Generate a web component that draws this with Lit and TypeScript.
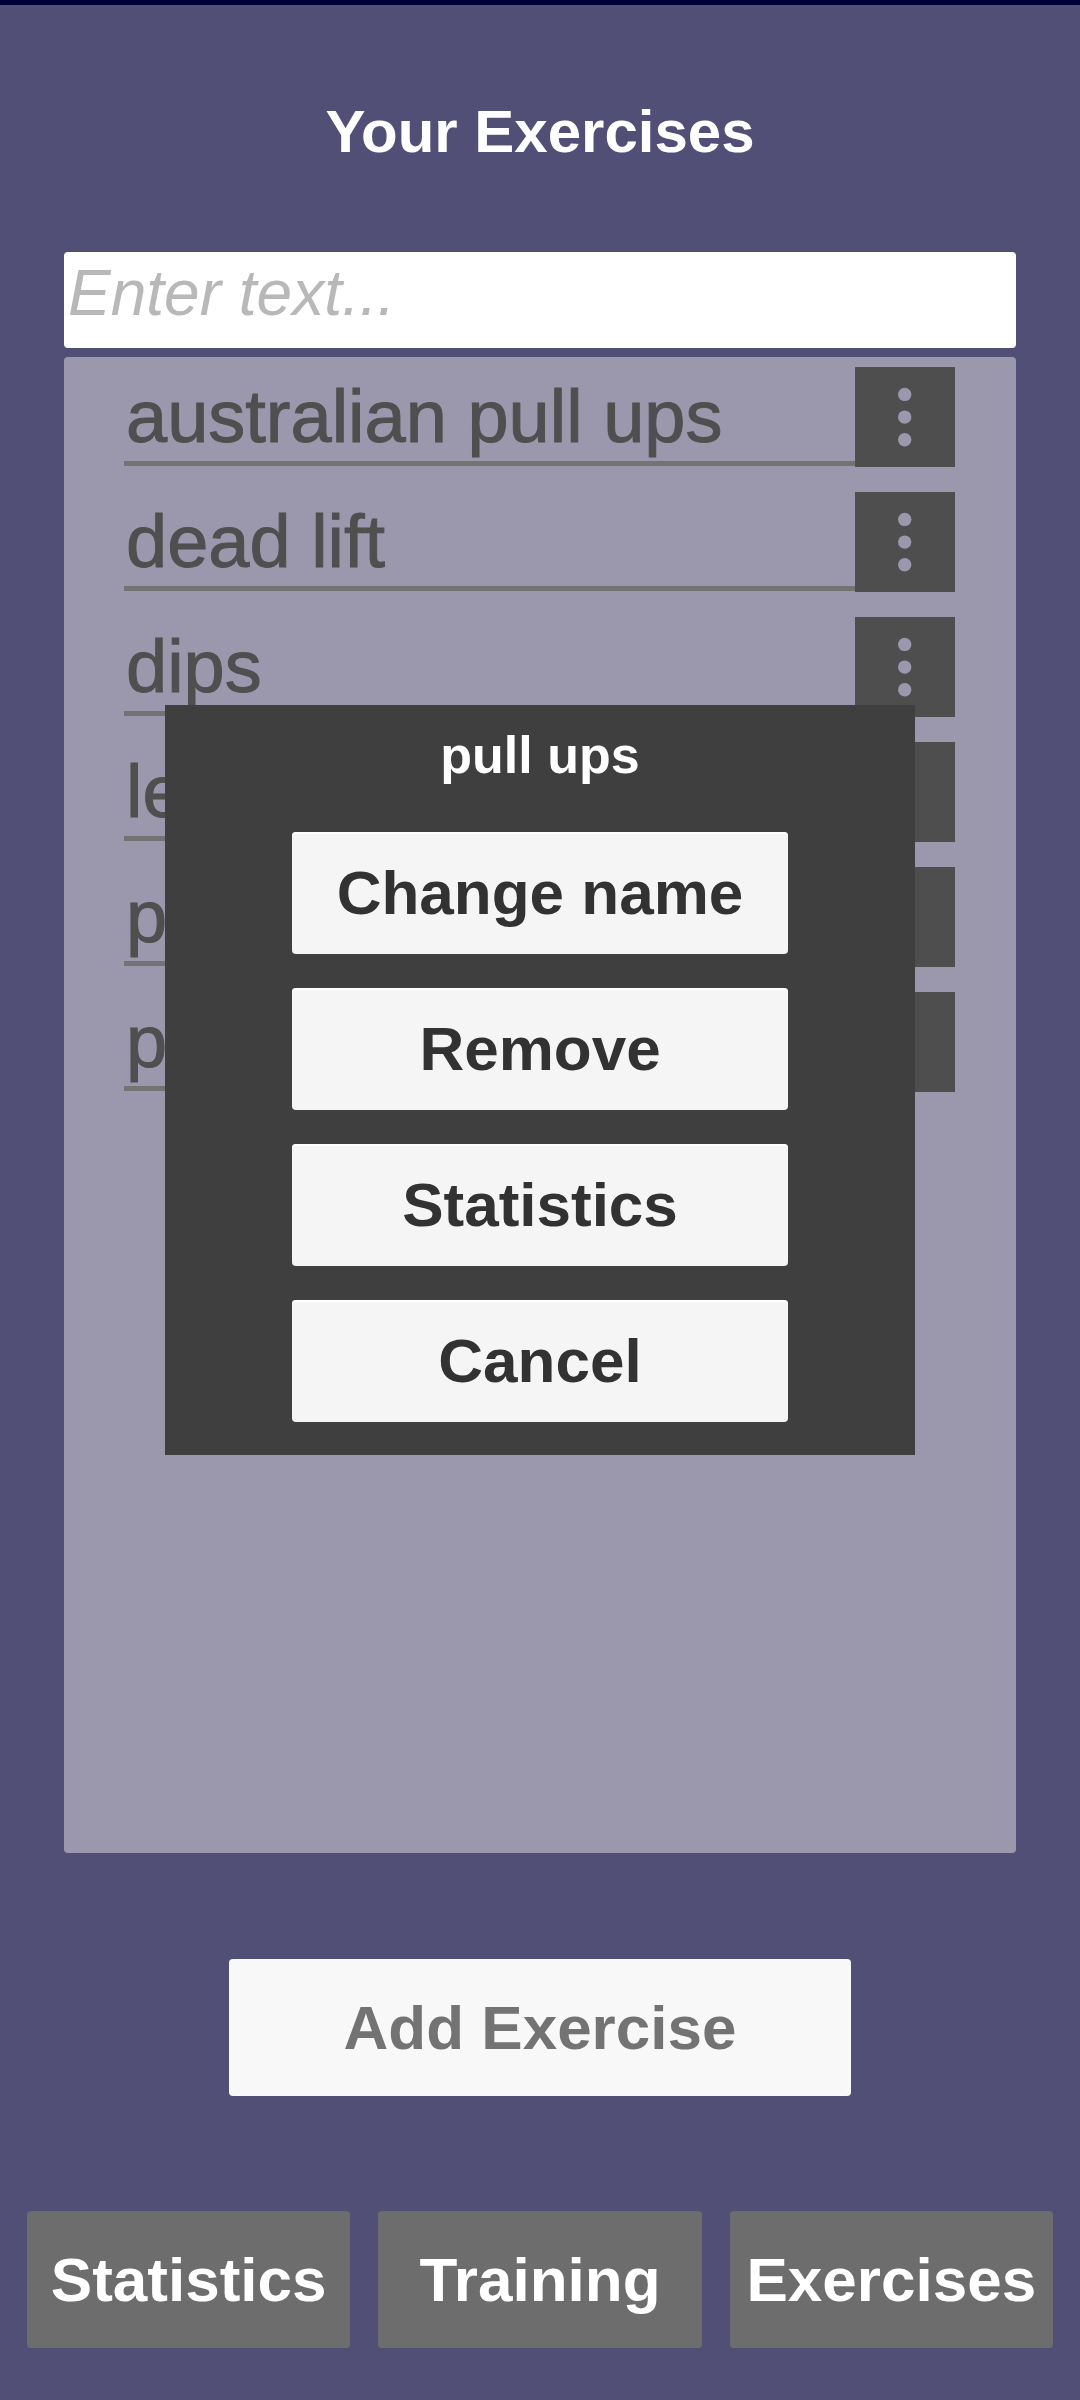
import { LitElement, html, css } from "lit";
import { customElement, state } from "lit/decorators.js";

@customElement("exercise-row")
class ExerciseRow extends LitElement {
  static properties = { name: { type: String } };
  declare name: string;

  static styles = css`
    :host {
      display: block;
    }
    .row {
      display: flex;
      height: 100px;
    }
    .name {
      flex: 1;
      min-width: 0;
      margin-bottom: 1px;
      padding-left: 2px;
      border-bottom: 5px solid #737373;
      color: #4f4f4f;
      font-size: 74px;
      line-height: 100px;
      white-space: nowrap;
      -webkit-text-stroke: 1px #4f4f4f;
    }
    .more {
      flex: none;
      width: 100px;
      height: 100px;
      padding: 0;
      border: 0;
      background: #4e4e4e;
      color: #9b98ad;
      cursor: pointer;
    }
    .dots {
      display: block;
      width: 100px;
      height: 100px;
      fill: currentColor;
    }
  `;

  render() {
    return html`
      <div class="row">
        <div class="name">${this.name}</div>
        <button class="more" type="button" aria-label="Options for ${this.name}">
          <svg class="dots" viewBox="0 0 100 100" aria-hidden="true">
            <circle cx="49.7" cy="27.4" r="6.7" />
            <circle cx="49.7" cy="50.1" r="6.7" />
            <circle cx="49.7" cy="72.7" r="6.7" />
          </svg>
        </button>
      </div>
    `;
  }
}

@customElement("app-root")
class AppRoot extends LitElement {
  static styles = css`
    :host {
      display: block;
      font-family: "Liberation Sans", Arial, sans-serif;
    }
    * {
      box-sizing: border-box;
    }
    .screen {
      display: flex;
      flex-direction: column;
      min-height: 100vh;
      border-top: 5px solid #02003a;
      background: #524f76;
    }
    .title {
      margin: 0;
      padding: 97px 0 90px;
      color: #fff;
      font-size: 60px;
      line-height: 60px;
      font-weight: 700;
      text-align: center;
    }
    .content {
      flex: 1;
      display: flex;
      flex-direction: column;
      gap: 9px;
      margin: 0 64px;
    }
    .search {
      width: 100%;
      height: 96px;
      padding: 0 4px 14px;
      border: 0;
      border-radius: 4px;
      background: #fff;
      color: #323232;
      font-family: inherit;
      font-size: 64px;
      outline: none;
    }
    .search::placeholder {
      color: #b8b8b8;
      font-style: italic;
      opacity: 1;
    }
    .list {
      flex: 1;
      display: flex;
      flex-direction: column;
      gap: 25px;
      margin: 0;
      padding: 10px 61px 10px 60px;
      border-radius: 4px;
      background: #9b98ad;
      list-style: none;
    }
    .btn {
      border: 0;
      border-radius: 4px;
      font-family: inherit;
      font-size: 62px;
      font-weight: 700;
      white-space: nowrap;
      cursor: pointer;
    }
    .add {
      align-self: center;
      width: 58%;
      max-width: 622px;
      height: 137px;
      margin: 106px 0 115px;
      padding: 0;
      background: #f8f8f8;
      color: #737373;
    }
    .tabs {
      display: grid;
      grid-template-columns: repeat(3, 1fr);
      gap: 28px;
      padding: 0 27px 52px;
    }
    .tab {
      height: 137px;
      padding: 0;
      background: #6d6d6d;
      color: #fff;
    }
    .overlay {
      position: absolute;
      inset: 0;
      display: grid;
      place-items: center;
      padding-bottom: 240px;
    }
    .dialog {
      position: static;
      display: flex;
      flex-direction: column;
      gap: 34px;
      width: 750px;
      max-width: 100%;
      margin: 0;
      padding: 20px 127px 33px;
      border: 0;
      background: #3f3f3f;
    }
    .dialog-title {
      margin: 0 0 13px;
      color: #fff;
      font-size: 52px;
      line-height: 60px;
      font-weight: 700;
      text-align: center;
    }
    .choice {
      height: 122px;
      padding: 0 0 2px;
      box-shadow: inset 0 2px #fff;
      background: #f5f5f5;
      color: #323232;
    }
  `;

  @state() private exercises = [
    "australian pull ups",
    "dead lift",
    "dips",
    "leg raises",
    "plank",
    "pull ups",
  ];
  @state() private selected = "pull ups";

  private close() {
    this.selected = "";
  }

  render() {
    return html`
      <div class="screen">
        <h1 class="title">Your Exercises</h1>
        <main class="content">
          <input class="search" type="text" aria-label="Exercise name" placeholder="Enter text..." />
          <ul class="list">
            ${this.exercises.map((name) => html`<li><exercise-row .name=${name}></exercise-row></li>`)}
          </ul>
        </main>
        <button class="btn add" type="button">Add Exercise</button>
        <nav class="tabs">
          ${["Statistics", "Training", "Exercises"].map(
            (label) => html`<button class="btn tab" type="button">${label}</button>`
          )}
        </nav>
      </div>
      ${this.selected
        ? html`
            <div class="overlay">
              <dialog class="dialog" open aria-labelledby="dialog-title">
                <h2 class="dialog-title" id="dialog-title">${this.selected}</h2>
                ${["Change name", "Remove", "Statistics", "Cancel"].map(
                  (label) =>
                    html`<button class="btn choice" type="button" @click=${this.close}>${label}</button>`
                )}
              </dialog>
            </div>
          `
        : ""}
    `;
  }
}
